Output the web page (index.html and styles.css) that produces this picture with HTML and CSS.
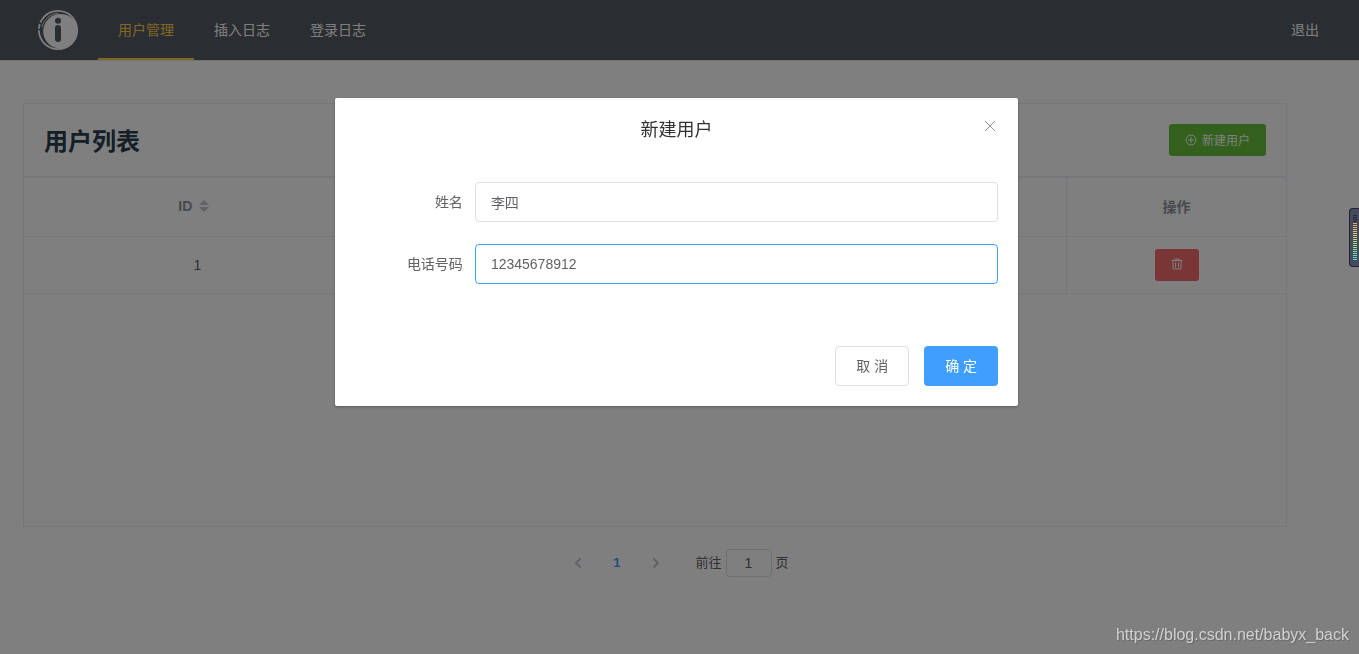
FILE: index.html
```html
<!DOCTYPE html>
<html lang="zh-CN">
<head>
<meta charset="utf-8">
<title>用户管理</title>
<link rel="stylesheet" href="styles.css">
</head>
<body>
<header class="topbar">
  <svg class="logo" viewBox="0 0 40 40" aria-hidden="true">
    <circle cx="20" cy="20" r="20" fill="#fff"/>
    <circle cx="20" cy="20" r="18.300" fill="#545c64"/>
    <circle cx="22.500" cy="21.300" r="17.300" fill="#fff"/>
    <path d="M4 17C6 9 12 4 20 3.300" fill="none" stroke="#fff" stroke-width=".8"/>
    <path d="M0 12.500l4 1.500M0 19.500h3" stroke="#545c64" stroke-width="1.500"/>
    <circle cx="20" cy="10.700" r="3" fill="#545c64"/>
    <rect x="17" y="15" width="6" height="17" rx="3" fill="#545c64"/>
  </svg>
  <nav class="menu">
    <a class="menu-item active" href="#users">用户管理</a>
    <a class="menu-item" href="#insert">插入日志</a>
    <a class="menu-item" href="#login">登录日志</a>
  </nav>
  <a class="menu-item logout" href="#logout">退出</a>
</header>

<main class="content">
  <section class="card">
    <div class="card-head">
      <h2 class="card-title">用户列表</h2>
      <button class="btn btn-small btn-success" type="button">
        <svg class="icon" viewBox="0 0 12 12" aria-hidden="true"><circle cx="6" cy="6" r="5"/><path d="M6 3v6M3 6h6"/></svg>
        <span>新建用户</span>
      </button>
    </div>
    <div class="table-box">
      <table class="table">
        <colgroup><col><col><col><col class="col-action"></colgroup>
        <thead>
          <tr>
            <th><span class="sortable">ID<svg class="caret" viewBox="0 0 24 14" aria-hidden="true"><path d="M7 6l5-5 5 5zM7 8l5 5 5-5z"/></svg></span></th>
            <th></th>
            <th></th>
            <th>操作</th>
          </tr>
        </thead>
        <tbody>
          <tr>
            <td>1</td>
            <td></td>
            <td></td>
            <td>
              <button class="btn btn-small btn-danger" type="button" aria-label="删除">
                <svg class="icon" viewBox="0 0 12 12" aria-hidden="true"><path d="M.500 2.500h11M4 2V1h4v1M2 2.500v8.500h8V2.500M4.500 4.500v5M7.500 4.500v5"/></svg>
              </button>
            </td>
          </tr>
        </tbody>
      </table>
    </div>
  </section>
  <nav class="pager" aria-label="分页">
    <button class="page-btn" type="button" aria-label="上一页"><svg class="arrow" viewBox="0 0 12 12"><path d="M8.500 1.500L4 6l4.500 4.500"/></svg></button>
    <button class="page-btn current" type="button">1</button>
    <button class="page-btn" type="button" aria-label="下一页"><svg class="arrow" viewBox="0 0 12 12"><path d="M3.500 1.500L8 6l-4.500 4.500"/></svg></button>
    <label class="jump">前往<input class="jump-input" type="text" value="1">页</label>
  </nav>
</main>

<div class="overlay">
  <form class="dialog" role="dialog" aria-labelledby="dialog-title">
    <div class="dialog-head">
      <h3 class="dialog-title" id="dialog-title">新建用户</h3>
      <button class="close" type="button" aria-label="关闭"><svg class="close-icon" viewBox="0 0 12 12"><path d="M1 1l10 10M11 1L1 11"/></svg></button>
    </div>
    <div class="dialog-body">
      <div class="field">
        <label class="label" for="name">姓名</label>
        <input class="input" id="name" type="text" value="李四">
      </div>
      <div class="field">
        <label class="label" for="phone">电话号码</label>
        <input class="input focused" id="phone" type="text" value="12345678912">
      </div>
    </div>
    <div class="dialog-foot">
      <button class="btn btn-plain" type="button">取 消</button>
      <button class="btn btn-primary" type="button">确 定</button>
    </div>
  </form>
</div>

<div class="meter" aria-hidden="true"><div class="meter-bars"></div></div>
<div class="watermark">https://blog.csdn.net/babyx_back</div>
</body>
</html>
```
FILE: styles.css
```css
* { box-sizing: border-box; }
body {
  margin: 0;
  min-height: 100vh;
  background: #fff;
  color: #606266;
  font-family: "Liberation Sans", "Noto Sans CJK SC", sans-serif;
  font-size: 14px;
  overflow: hidden;
}
button, input { font: inherit; margin: 0; }
button { cursor: pointer; }

.topbar {
  display: flex;
  align-items: center;
  height: 61px;
  padding: 0 20px 0 38px;
  background: #545c64;
  border-bottom: 1px solid #e6e6e6;
}
.logo { width: 40px; height: 40px; }
.menu { display: flex; flex: 1; margin-left: 20px; }
.menu-item {
  height: 60px;
  padding: 0 20px;
  line-height: 60px;
  color: #fff;
  text-decoration: none;
}
.menu-item.active { color: #ffd04b; border-bottom: 2px solid #ffd04b; }

.content { padding: 42px 72px 0 23px; }
.card { border: 1px solid #ebeef5; }
.card-head {
  display: flex;
  align-items: center;
  justify-content: space-between;
  height: 72px;
  padding: 0 20px;
}
.card-title { margin: 0; padding-top: 3px; font-size: 24px; line-height: 32px; color: #2c3e50; }
.table-box { min-height: 350px; border-top: 2px solid #ebeef5; }
.table { width: 100%; border-collapse: separate; border-spacing: 0; table-layout: fixed; }
.col-action { width: 219px; }
.table th, .table td {
  height: 57px;
  padding: 0 0 1px;
  text-align: center;
  vertical-align: middle;
  border-bottom: 1px solid #ebeef5;
  border-right: 1px solid #ebeef5;
}
.table th { height: 59px; padding-bottom: 2px; color: #909399; }
.table th:last-child, .table td:last-child { border-right: 0; }
.sortable { display: inline-flex; align-items: center; }
.caret { width: 24px; height: 14px; fill: #c0c4cc; }

.btn {
  height: 40px;
  padding: 0 20px 2px;
  border: 1px solid transparent;
  border-radius: 4px;
  color: #fff;
}
.btn-small {
  display: inline-flex;
  align-items: center;
  gap: 5px;
  height: 32px;
  padding: 0 15px 1px;
  border-radius: 3px;
  font-size: 12px;
  vertical-align: middle;
}
.btn-success { background: #67c23a; }
.btn-danger { background: #f56c6c; }
.btn-primary { background: #409eff; }
.btn-plain { background: #fff; border-color: #dcdfe6; color: #606266; }
.icon { width: 12px; height: 12px; fill: none; stroke: currentColor; }

.pager {
  display: flex;
  justify-content: center;
  align-items: center;
  margin-top: 22px;
  padding-left: 37px;
  font-size: 13px;
}
.page-btn {
  width: 39px;
  height: 28px;
  padding: 0 0 1px;
  border: 0;
  background: none;
  color: #c0c4cc;
}
.page-btn.current { color: #409eff; font-weight: 700; }
.arrow { display: block; width: 12px; height: 12px; margin: auto; fill: none; stroke: currentColor; stroke-width: 2; }
.jump { display: flex; align-items: center; gap: 4px; margin-left: 20px; line-height: 26px; }
.jump-input {
  width: 46px;
  height: 28px;
  padding: 0 3px;
  border: 1px solid #dcdfe6;
  border-radius: 4px;
  background: #fff;
  color: #606266;
  font-size: 14px;
  text-align: center;
}

.overlay {
  position: fixed;
  inset: 0;
  padding: 98px 6px 0 0;
  background: rgba(0, 0, 0, .5);
}
.dialog {
  width: 50.5%;
  margin: 0 auto;
  background: #fff;
  border-radius: 2px;
  box-shadow: 0 1px 3px rgba(0, 0, 0, .3);
}
.dialog-head { position: relative; padding: 20px 20px 10px; text-align: center; }
.dialog-title { margin: 0; font-size: 18px; font-weight: 400; line-height: 24px; color: #303133; }
.close {
  position: absolute;
  top: 20px;
  right: 20px;
  padding: 0;
  border: 0;
  background: none;
  color: #909399;
}
.close-icon { display: block; width: 16px; height: 16px; padding: 2px; fill: none; stroke: currentColor; }
.dialog-body { padding: 30px 20px; }
.field { display: flex; margin-bottom: 22px; }
.label { width: 120px; padding-right: 12px; line-height: 40px; text-align: right; }
.input {
  flex: 1;
  min-width: 0;
  height: 40px;
  padding: 0 15px;
  border: 1px solid #dcdfe6;
  border-radius: 4px;
  outline: 0;
  background: #fff;
  color: #606266;
}
.input.focused { border-color: #409eff; }
.dialog-foot { display: flex; justify-content: flex-end; gap: 15px; padding: 10px 20px 20px; }

.meter {
  position: fixed;
  top: 208px;
  right: 0;
  width: 10px;
  height: 59px;
  padding: 6px 2px 6px 3px;
  border: 1px solid #20232e;
  border-right: 0;
  border-radius: 4px 0 0 4px;
  background: #454a5c;
}
.meter-bars {
  height: 45px;
  background:
    repeating-linear-gradient(transparent 0 1px, #454a5c 1px 2px),
    linear-gradient(#252838 0 8px, #f09a60 8px, #e0d060 18px, #b0e080 28px, #50e0d0);
}
.watermark {
  position: fixed;
  right: 10px;
  bottom: 10px;
  font-size: 16px;
  line-height: 18px;
  color: #d0d0d0;
  text-shadow: 1px 1px 1px rgba(0, 0, 0, .2);
}
```
